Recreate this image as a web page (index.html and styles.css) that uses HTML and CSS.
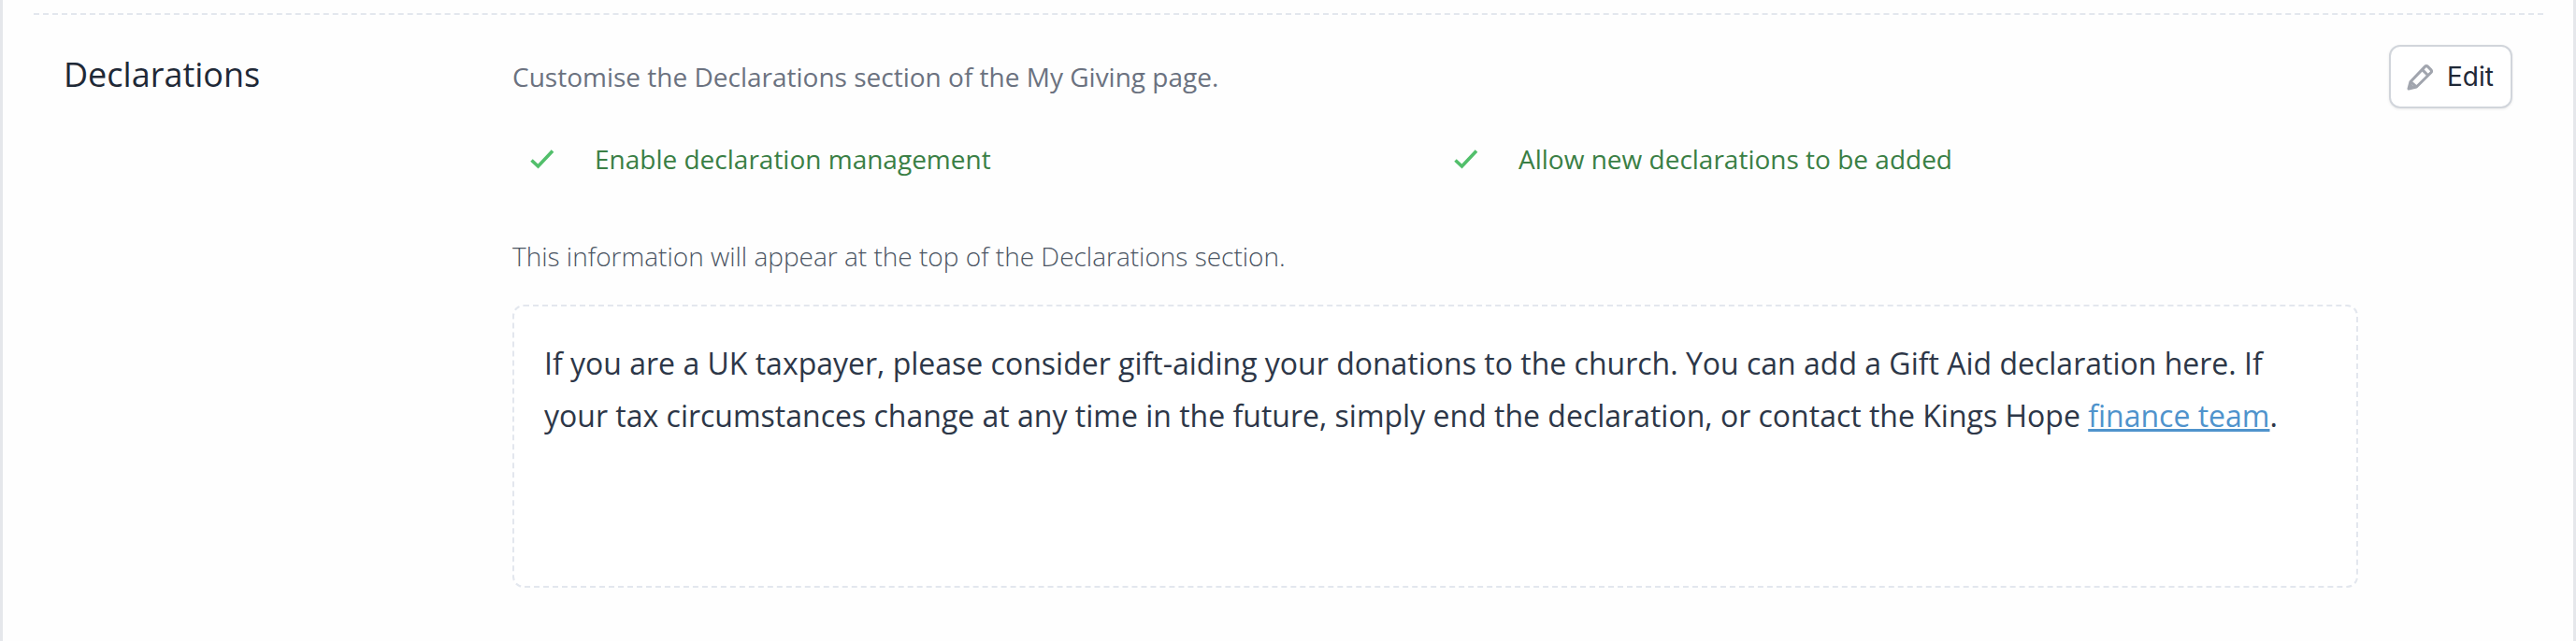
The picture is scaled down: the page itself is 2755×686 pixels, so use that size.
FILE: index.html
```html
<!DOCTYPE html>
<html lang="en">
<head>
<meta charset="utf-8">
<title>Declarations</title>
<link rel="stylesheet" href="styles.css">
</head>
<body>
<main class="panel">
  <section class="section">
    <h2 class="section-title">Declarations</h2>
    <div class="section-body">
      <p class="intro">Customise the Declarations section of the My Giving page.</p>
      <ul class="options">
        <li class="option">
          <svg class="check" viewBox="0 0 26 22" aria-hidden="true"><path d="M1.5 12.5 L8.5 19 L24 2.5"/></svg>
          <span>Enable declaration management</span>
        </li>
        <li class="option">
          <svg class="check" viewBox="0 0 26 22" aria-hidden="true"><path d="M1.5 12.5 L8.5 19 L24 2.5"/></svg>
          <span>Allow new declarations to be added</span>
        </li>
      </ul>
      <p class="hint">This information will appear at the top of the Declarations section.</p>
      <div class="message">
        <p>If you are a UK taxpayer, please consider gift-aiding your donations to the church. You can add a Gift Aid declaration here. If your tax circumstances change at any time in the future, simply end the declaration, or contact the Kings Hope <a href="#">finance team</a>.</p>
      </div>
    </div>
    <button class="edit" type="button">
      <svg class="pencil" viewBox="0 0 28 29" aria-hidden="true">
        <path d="M2 27 L4 19.5 L19.4 3.4 Q21 1.8 22.6 3.4 L25.8 6.6 Q27.4 8.2 25.8 9.8 L10.4 25 Z"/>
        <path d="M16.4 6.4 L22.8 12.8"/>
        <path d="M4 19.5 L10.4 25"/>
        <path class="tip" d="M2 27 L3.4 21.6 L8 25.6 Z"/>
      </svg>
      <span>Edit</span>
    </button>
  </section>
</main>
</body>
</html>
```
FILE: styles.css
```css
* { box-sizing: border-box; }
html, body { margin: 0; padding: 0; height: 100%; }
body {
  background: #fefefe;
  font-family: "Open Sans", sans-serif;
  color: #1f2937;
}
.panel {
  height: 686px;
  padding: 14px 32px 0 33px;
  border-left: 3px solid #e5e7eb;
  border-right: 3px solid #e5e7eb;
  overflow: hidden;
}
.section {
  display: grid;
  grid-template-columns: 480px 1974px 1fr;
  border-top: 2px dashed #e3e7ee;
  padding: 32px 33px 0 32px;
  align-items: start;
}
.section-title {
  margin: 2px 0 0;
  font-size: 36px;
  line-height: 60px;
  font-weight: 400;
  color: #1f2937;
}
.section-body { min-width: 0; }
.intro {
  margin: 0;
  padding-top: 12px;
  font-size: 28px;
  line-height: 44px;
  color: #6b7280;
}
.options {
  list-style: none;
  margin: 44px 0 0;
  padding: 0;
  display: grid;
  grid-template-columns: 988px 1fr;
}
.option {
  display: flex;
  align-items: center;
  font-size: 28px;
  line-height: 44px;
  color: #3a7f45;
}
.check {
  width: 26px;
  height: 22px;
  margin-left: 19px;
  margin-right: 43px;
  flex: none;
}
.check path {
  fill: none;
  stroke: #52bf6b;
  stroke-width: 3.6;
}
.hint {
  margin: 60px 0 0;
  font-size: 28px;
  line-height: 44px;
  font-weight: 300;
  color: #4b5563;
}
.message {
  margin-top: 30px;
  height: 303px;
  padding: 33px 32px;
  border: 2px dashed #e3e7ee;
  border-radius: 12px;
  background: #fff;
}
.message p {
  margin: 0;
  font-size: 32px;
  line-height: 56px;
  color: #2d3748;
}
.message a { color: #4f93cc; text-decoration: underline; }
.edit {
  justify-self: end;
  width: 132px;
  height: 68px;
  display: flex;
  align-items: center;
  gap: 15px;
  padding: 0 16px 0 17px;
  background: #fff;
  border: 2px solid #d1d5db;
  border-radius: 12px;
  box-shadow: 0 1px 3px rgba(0, 0, 0, 0.08);
  font: 400 28px/40px "Inter", sans-serif;
  color: #1f2937;
}
.pencil { width: 28px; height: 29px; flex: none; }
.pencil path {
  fill: none;
  stroke: #a1a5ae;
  stroke-width: 3;
  stroke-linejoin: round;
}
.pencil .tip { fill: #a1a5ae; stroke-width: 1; }
```
